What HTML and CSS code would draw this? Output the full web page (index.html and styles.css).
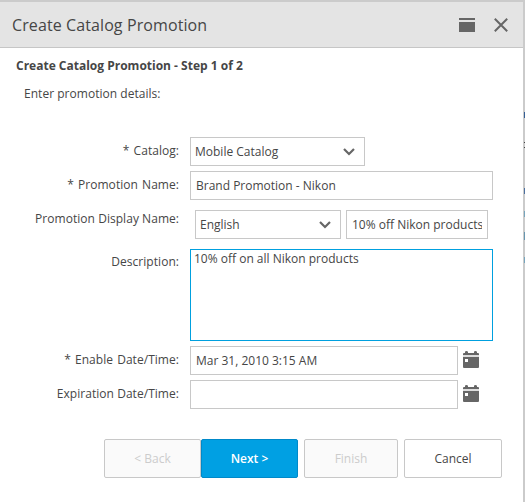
FILE: index.html
```html
<!DOCTYPE html>
<html lang="en">
<head>
<meta charset="utf-8">
<title>Create Catalog Promotion</title>
<link rel="stylesheet" href="styles.css">
</head>
<body>
<div class="dialog">
  <header class="titlebar">
    <h1 class="title">Create Catalog Promotion</h1>
    <svg class="maximize" width="16" height="14" viewBox="0 0 16 14"><path d="M0 0h16v2H0zM0 4h16v10H0z" fill="#666"/></svg>
    <svg class="close" width="14" height="14" viewBox="0 0 14 14"><path d="M.8.8l12.4 12.4M13.2.8L.8 13.2" stroke="#666" stroke-width="2" fill="none"/></svg>
  </header>
  <main class="content">
    <h2 class="step">Create Catalog Promotion - Step 1 of 2</h2>
    <p class="hint">Enter promotion details:</p>
    <form class="form">
      <div class="row">
        <span class="label required">* Catalog:</span>
        <div class="select catalog"><span>Mobile Catalog</span><svg width="12" height="8" viewBox="0 0 12 8"><path d="M1 1l5 5 5-5" stroke="#666" stroke-width="2.2" fill="none"/></svg></div>
      </div>
      <div class="row">
        <span class="label required">* Promotion Name:</span>
        <input class="input wide" type="text" value="Brand Promotion - Nikon">
      </div>
      <div class="row display-row">
        <span class="label">Promotion Display Name:</span>
        <div class="select language"><span>English</span><svg width="12" height="8" viewBox="0 0 12 8"><path d="M1 1l5 5 5-5" stroke="#666" stroke-width="2.2" fill="none"/></svg></div>
        <input class="input display-name" type="text" value="10% off Nikon products">
      </div>
      <div class="row description-row">
        <span class="label">Description:</span>
        <textarea class="textarea">10% off on all Nikon products</textarea>
      </div>
      <div class="row">
        <span class="label required">* Enable Date/Time:</span>
        <input class="input date" type="text" value="Mar 31, 2010 3:15 AM">
        <svg class="calendar" width="16" height="18" viewBox="0 0 16 18"><path d="M0 4h16v2H0z" fill="#ddd"/><path d="M2 1q0-1 1.400-1T5 1v1h6V1q0-1 1.400-1T14 1v1h1q1 0 1 1v1H0V3q0-1 1-1h1zM0 6h16v10q0 1-1 1H1q-1 0-1-1z" fill="#666"/><path d="M2 8h3v3H2z" fill="#fff"/></svg>
      </div>
      <div class="row">
        <span class="label">Expiration Date/Time:</span>
        <input class="input date" type="text" value="">
        <svg class="calendar" width="16" height="18" viewBox="0 0 16 18"><path d="M0 4h16v2H0z" fill="#ddd"/><path d="M2 1q0-1 1.400-1T5 1v1h6V1q0-1 1.400-1T14 1v1h1q1 0 1 1v1H0V3q0-1 1-1h1zM0 6h16v10q0 1-1 1H1q-1 0-1-1z" fill="#666"/><path d="M2 8h3v3H2z" fill="#fff"/></svg>
      </div>
    </form>
    <div class="buttons">
      <button class="button back" disabled>&lt; Back</button>
      <button class="button next">Next &gt;</button>
      <button class="button finish" disabled>Finish</button>
      <button class="button cancel">Cancel</button>
    </div>
  </main>
</div>
</body>
</html>
```
FILE: styles.css
```css
* { box-sizing: border-box; }
body {
  margin: 0;
  height: 502px;
  overflow: hidden;
  padding: 2px 2px 0 0;
  font: 12px/16px "Open Sans", sans-serif;
  color: #464646;
  background:
    linear-gradient(#345f96, #345f96) 524px 112px / 1px 6px no-repeat,
    linear-gradient(#444, #444) 524px 142px / 1px 1px no-repeat,
    linear-gradient(#444, #444) 524px 147px / 1px 1px no-repeat,
    linear-gradient(#4c709f, #4c709f) 524px 188px / 1px 6px no-repeat,
    linear-gradient(#76a5bd, #76a5bd) 524px 211px / 1px 6px no-repeat,
    linear-gradient(#6796b0, #6796b0) 524px 232px / 1px 8px no-repeat,
    linear-gradient(#76a5bd, #76a5bd) 524px 257px / 1px 6px no-repeat,
    #cbcbcb;
}
.dialog { width: 523px; height: 500px; background: #fff; }
.titlebar {
  display: flex;
  align-items: center;
  height: 46px;
  padding: 0 15px 0 12px;
  background: #e4e4e4;
  border-bottom: 1px solid #c6c6c6;
}
.title { flex: 1; margin: 0; font-size: 16px; font-weight: 400; line-height: 24px; letter-spacing: 0.1px; }
.close { margin-left: 19px; }
.step { margin: 0; padding: 10px 16px 0; font-size: 12px; line-height: 16px; font-weight: 700; }
.hint { margin: 12px 0 0 24px; letter-spacing: 0.03px; }
.form { display: flex; flex-direction: column; gap: 5px; margin-top: 35px; }
.row { display: flex; align-items: center; height: 29px; }
.label { width: 179px; margin-right: 11px; text-align: right; white-space: nowrap; position: relative; top: -1px; letter-spacing: 0.04px; }
.required { word-spacing: 1px; }
.input, .select, .textarea {
  height: 29px;
  margin: 0;
  border: 1px solid #c8c8c8;
  border-radius: 0;
  background: #fff;
  color: #464646;
  font: inherit;
  letter-spacing: inherit;
  outline: 0;
}
.input { padding: 0 5px 1px; }
.wide { width: 303px; }
.date { width: 268px; }
.select { display: flex; align-items: center; justify-content: space-between; padding: 0 9px 0 4px; }
.catalog { width: 175px; }
.language { width: 146px; margin-left: 5px; }
.display-row { height: 34px; align-items: flex-end; }
.display-row .label { margin-bottom: 11px; }
.display-name { width: 142px; margin-left: 5px; }
.description-row { height: 92px; align-items: flex-start; margin-top: 5px; }
.description-row .label { padding-top: 6px; }
.textarea { width: 303px; height: 92px; padding: 1px 3px; border-color: #00a0df; resize: none; }
.calendar { margin: 0 0 1px 5px; }
.buttons { display: flex; margin: 30px 0 0 104px; }
.button {
  height: 39px;
  padding: 0;
  border: 1px solid #c8c8c8;
  border-radius: 2px;
  background: #fff;
  color: #464646;
  font: inherit;
  letter-spacing: inherit;
}
.button:disabled { background: #fafafa; color: #ccc; }
.back { width: 97px; }
.button.next { width: 97px; margin-right: 6px; background: #00a0e3; border-color: #0089c9; color: #fff; font-weight: 600; }
.finish { width: 94px; margin-right: 6px; }
.cancel { width: 98px; }
```
